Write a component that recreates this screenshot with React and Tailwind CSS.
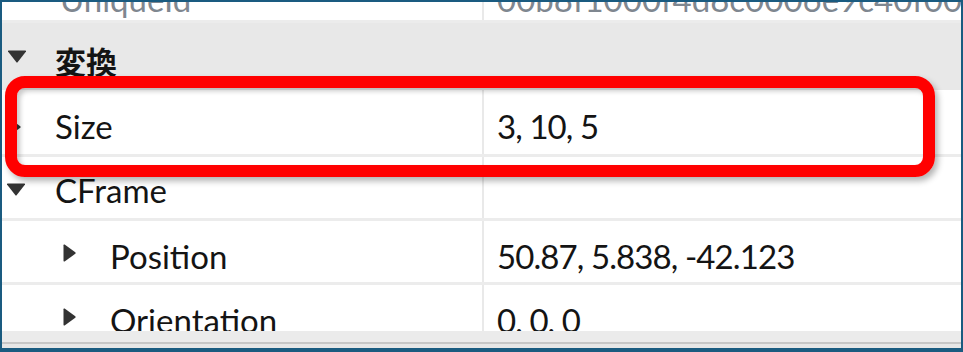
import React from 'react';

const Down = ({ className }) => (
  <svg width="20" height="13" viewBox="0 0 20 13" className={className}>
    <path d="M1 1.5 Q0.5 0.5 2 0.5 L18 0.5 Q19.5 0.5 19 1.5 L10.8 12 Q10 13 9.2 12 Z" fill="#333" />
  </svg>
);

const Right = ({ className }) => (
  <svg width="13" height="18" viewBox="0 0 13 18" className={className}>
    <path d="M0.5 1.2 Q0.5 0 1.6 0.6 L12.3 8.2 Q13 9 12.3 9.8 L1.6 17.4 Q0.5 18 0.5 16.8 Z" fill="#333" />
  </svg>
);

const Row = ({ depth = 0, open, label, value, h = 'h-[64px]', pt = 'pt-[14px]', triMt = 'mt-[13px]' }) => (
  <div className={`flex shrink-0 ${h} border-b-[3px] border-[#ececec] bg-white`}>
    <div className={`w-[480px] flex items-start ${pt} ${depth ? 'pl-[57px]' : 'pl-0'}`}>
      <div className={`${depth ? 'w-[51px]' : 'w-[53px]'} flex`}>
        {open === undefined ? null : open ? (
          <Down className={`ml-[4px] ${triMt}`} />
        ) : (
          <Right className={`${depth ? 'ml-[4px]' : 'ml-[6px]'} ${triMt}`} />
        )}
      </div>
      <span className="leading-[40px] text-[33px] text-[#141414]">{label}</span>
    </div>
    <div className={`flex-1 border-l-2 border-[#e9e9e9] pl-[13px] ${pt}`}>
      <span className="leading-[40px] text-[33px] tracking-[-0.9px] text-[#141414]">{value}</span>
    </div>
  </div>
);

export default function App() {
  return (
    <div className="relative w-[963px] h-[352px] overflow-hidden border-2 border-b-4 border-[#1a5b80] bg-white flex flex-col font-['Lato','Noto_Sans_CJK_JP',sans-serif]">
      <div className="h-[329px] shrink-0 overflow-hidden flex flex-col">
        <div className="flex shrink-0 h-[64px] -mt-[43px] border-b-[3px] border-[#ececec] bg-white">
          <div className="w-[480px] pl-[58px] pt-[20px]">
            <span className="leading-[40px] text-[33px] text-[#7f8790]">UniqueId</span>
          </div>
          <div className="flex-1 border-l-2 border-[#e9e9e9] pl-[13px] pt-[20px] whitespace-nowrap overflow-hidden">
            <span className="leading-[40px] text-[33px] text-[#7f8790]">00b8f1000f4d8c0006e9c40f00e4b</span>
          </div>
        </div>

        <div className="flex shrink-0 h-[67px] bg-[#e8e8e8] items-start pt-[18px]">
          <div className="w-[53px] flex">
            <Down className="ml-[5px] mt-[9px]" />
          </div>
          <span className="leading-[40px] text-[31px] font-bold text-[#141414] font-['Noto_Sans_CJK_JP',sans-serif]">変換</span>
        </div>

        <Row open={false} label="Size" value="3, 10, 5" h="h-[67px]" pt="pt-[16px]" triMt="mt-[12px]" />
        <Row open label="CFrame" value="" pt="pt-[13px]" triMt="mt-[13px]" />
        <Row depth={1} open={false} label="Position" value="50.87, 5.838, -42.123" pt="pt-[15px]" triMt="mt-[8px]" />
        <Row depth={1} open={false} label="Orientation" value="0, 0, 0" pt="pt-[15px]" triMt="mt-[8px]" />
      </div>

      <div className="h-[11px] shrink-0 bg-[#ebebeb]" />
      <div className="h-[2px] shrink-0 bg-[#c6c6c6]" />
      <div className="h-[4px] shrink-0 bg-[#e6e6e6]" />

      <div className="absolute left-[3px] top-[74px] w-[930px] h-[101px] rounded-[20px] border-[12px] border-[#ff0000] shadow-[inset_3px_3px_5px_rgba(0,0,0,0.22),3px_4px_6px_rgba(0,0,0,0.3)]" />
    </div>
  );
}
